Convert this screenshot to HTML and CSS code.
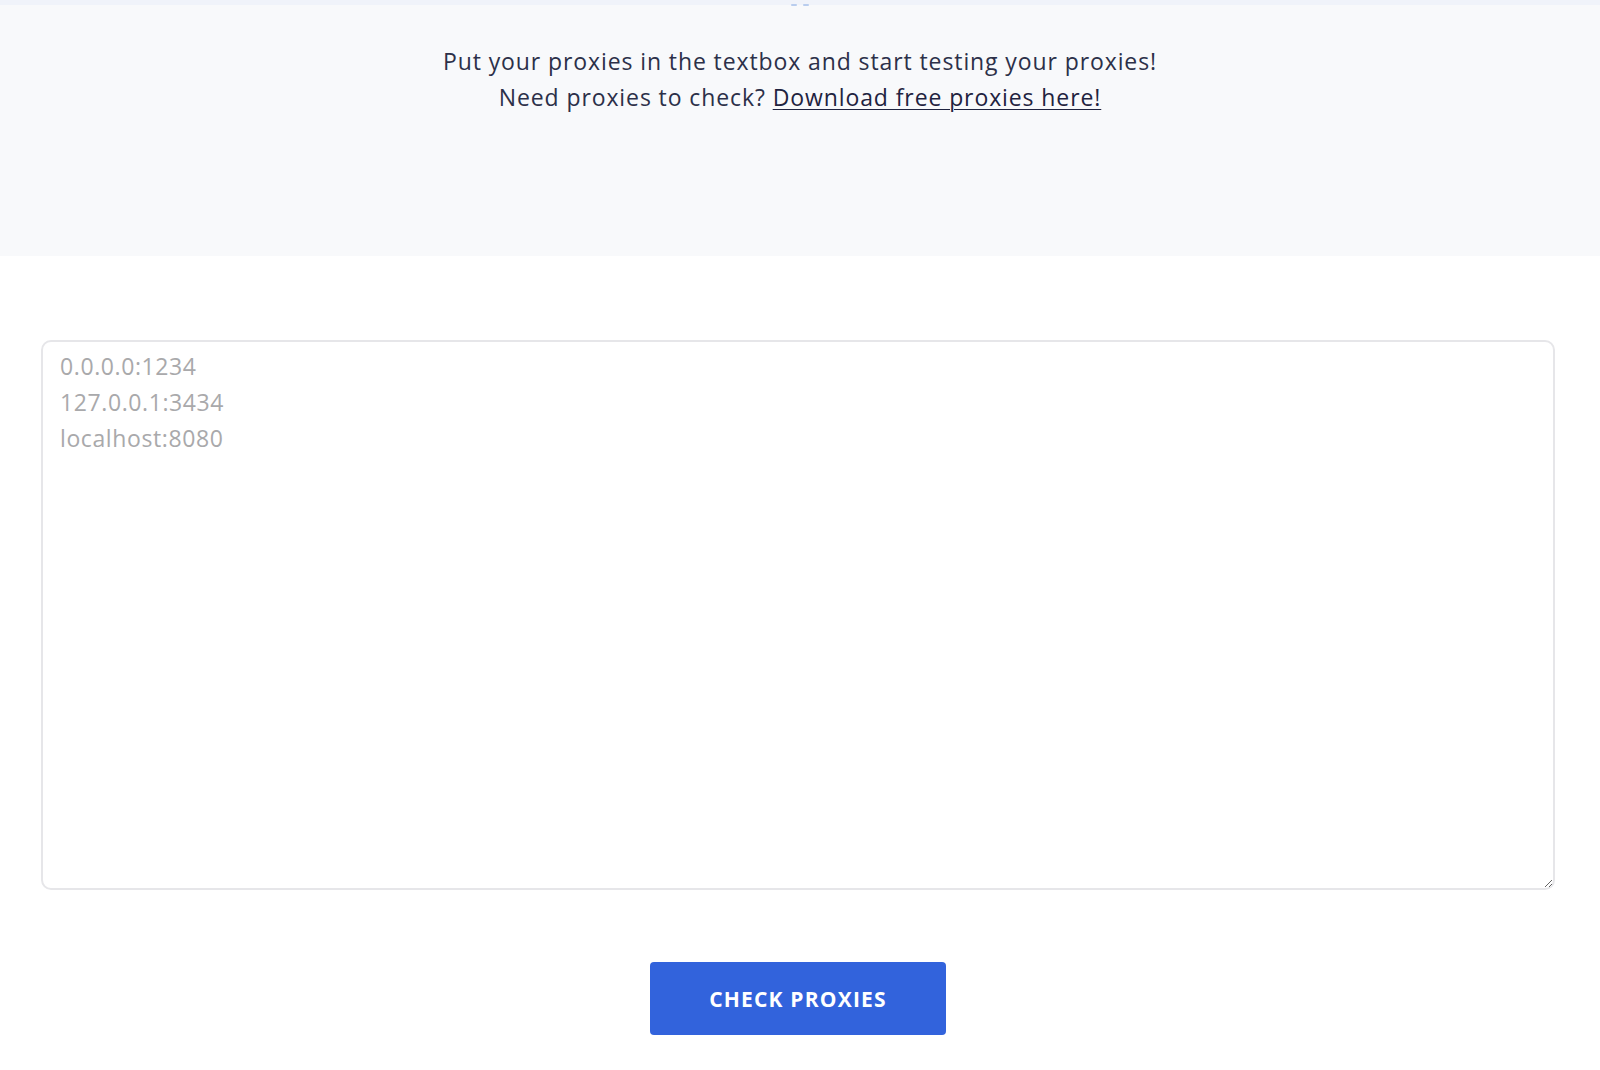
FILE: index.html
```html
<!DOCTYPE html>
<html lang="en">
<head>
<meta charset="utf-8">
<title>Proxy Checker</title>
<link rel="stylesheet" href="styles.css">
</head>
<body>
<header class="hero">
  <div class="top-band"><span class="dash"></span><span class="dash"></span></div>
  <p class="intro">Put your proxies in the textbox and start testing your proxies!<br>Need proxies to check? <a href="#" class="link">Download free proxies here!</a></p>
</header>
<main class="checker">
  <textarea class="proxies" placeholder="0.0.0.0:1234&#10;127.0.0.1:3434&#10;localhost:8080"></textarea>
  <button class="check-btn" type="button">CHECK PROXIES</button>
</main>
</body>
</html>
```
FILE: styles.css
```css
* { box-sizing: border-box; }
html, body { margin: 0; padding: 0; background: #ffffff; }
body { font-family: "Open Sans", "Noto Sans", sans-serif; color: #2c3049; }
.hero {
  background: #f8f9fb;
  height: 256px;
  display: flex;
  flex-direction: column;
  align-items: center;
}
.top-band {
  width: 100%;
  height: 5px;
  background: #f0f3fa;
  display: flex;
  justify-content: center;
  gap: 6px;
  align-items: flex-end;
}
.dash { width: 6px; height: 2px; background: #b9cdee; border-radius: 1px; margin-bottom: -1px; }
.intro {
  margin: 38px 0 0;
  text-align: center;
  font-size: 23px;
  letter-spacing: 0.9px;
  line-height: 36px;
  color: #2c3049;
}
.link { color: #1f2340; text-decoration: underline; text-underline-offset: 3px; text-decoration-thickness: 1px; }
.checker {
  display: flex;
  flex-direction: column;
  align-items: center;
  padding: 84px 45px 0 41px;
}
.proxies {
  display: block;
  width: 100%;
  height: 550px;
  border: 2px solid #e6e6e9;
  border-radius: 10px;
  padding: 6px 17px;
  font-family: "Open Sans", "Noto Sans", sans-serif;
  font-size: 23px;
  letter-spacing: 0.6px;
  line-height: 36px;
  color: #333;
  resize: vertical;
  outline: none;
}
.proxies::placeholder { color: #a9a9ab; }
.check-btn {
  margin-top: 72px;
  width: 296px;
  height: 73px;
  border: none;
  border-radius: 4px;
  background: #3263dc;
  color: #ffffff;
  font-family: "Open Sans", "Noto Sans", sans-serif;
  font-weight: 700;
  font-size: 21px;
  letter-spacing: 1.2px;
  cursor: pointer;
}
```
